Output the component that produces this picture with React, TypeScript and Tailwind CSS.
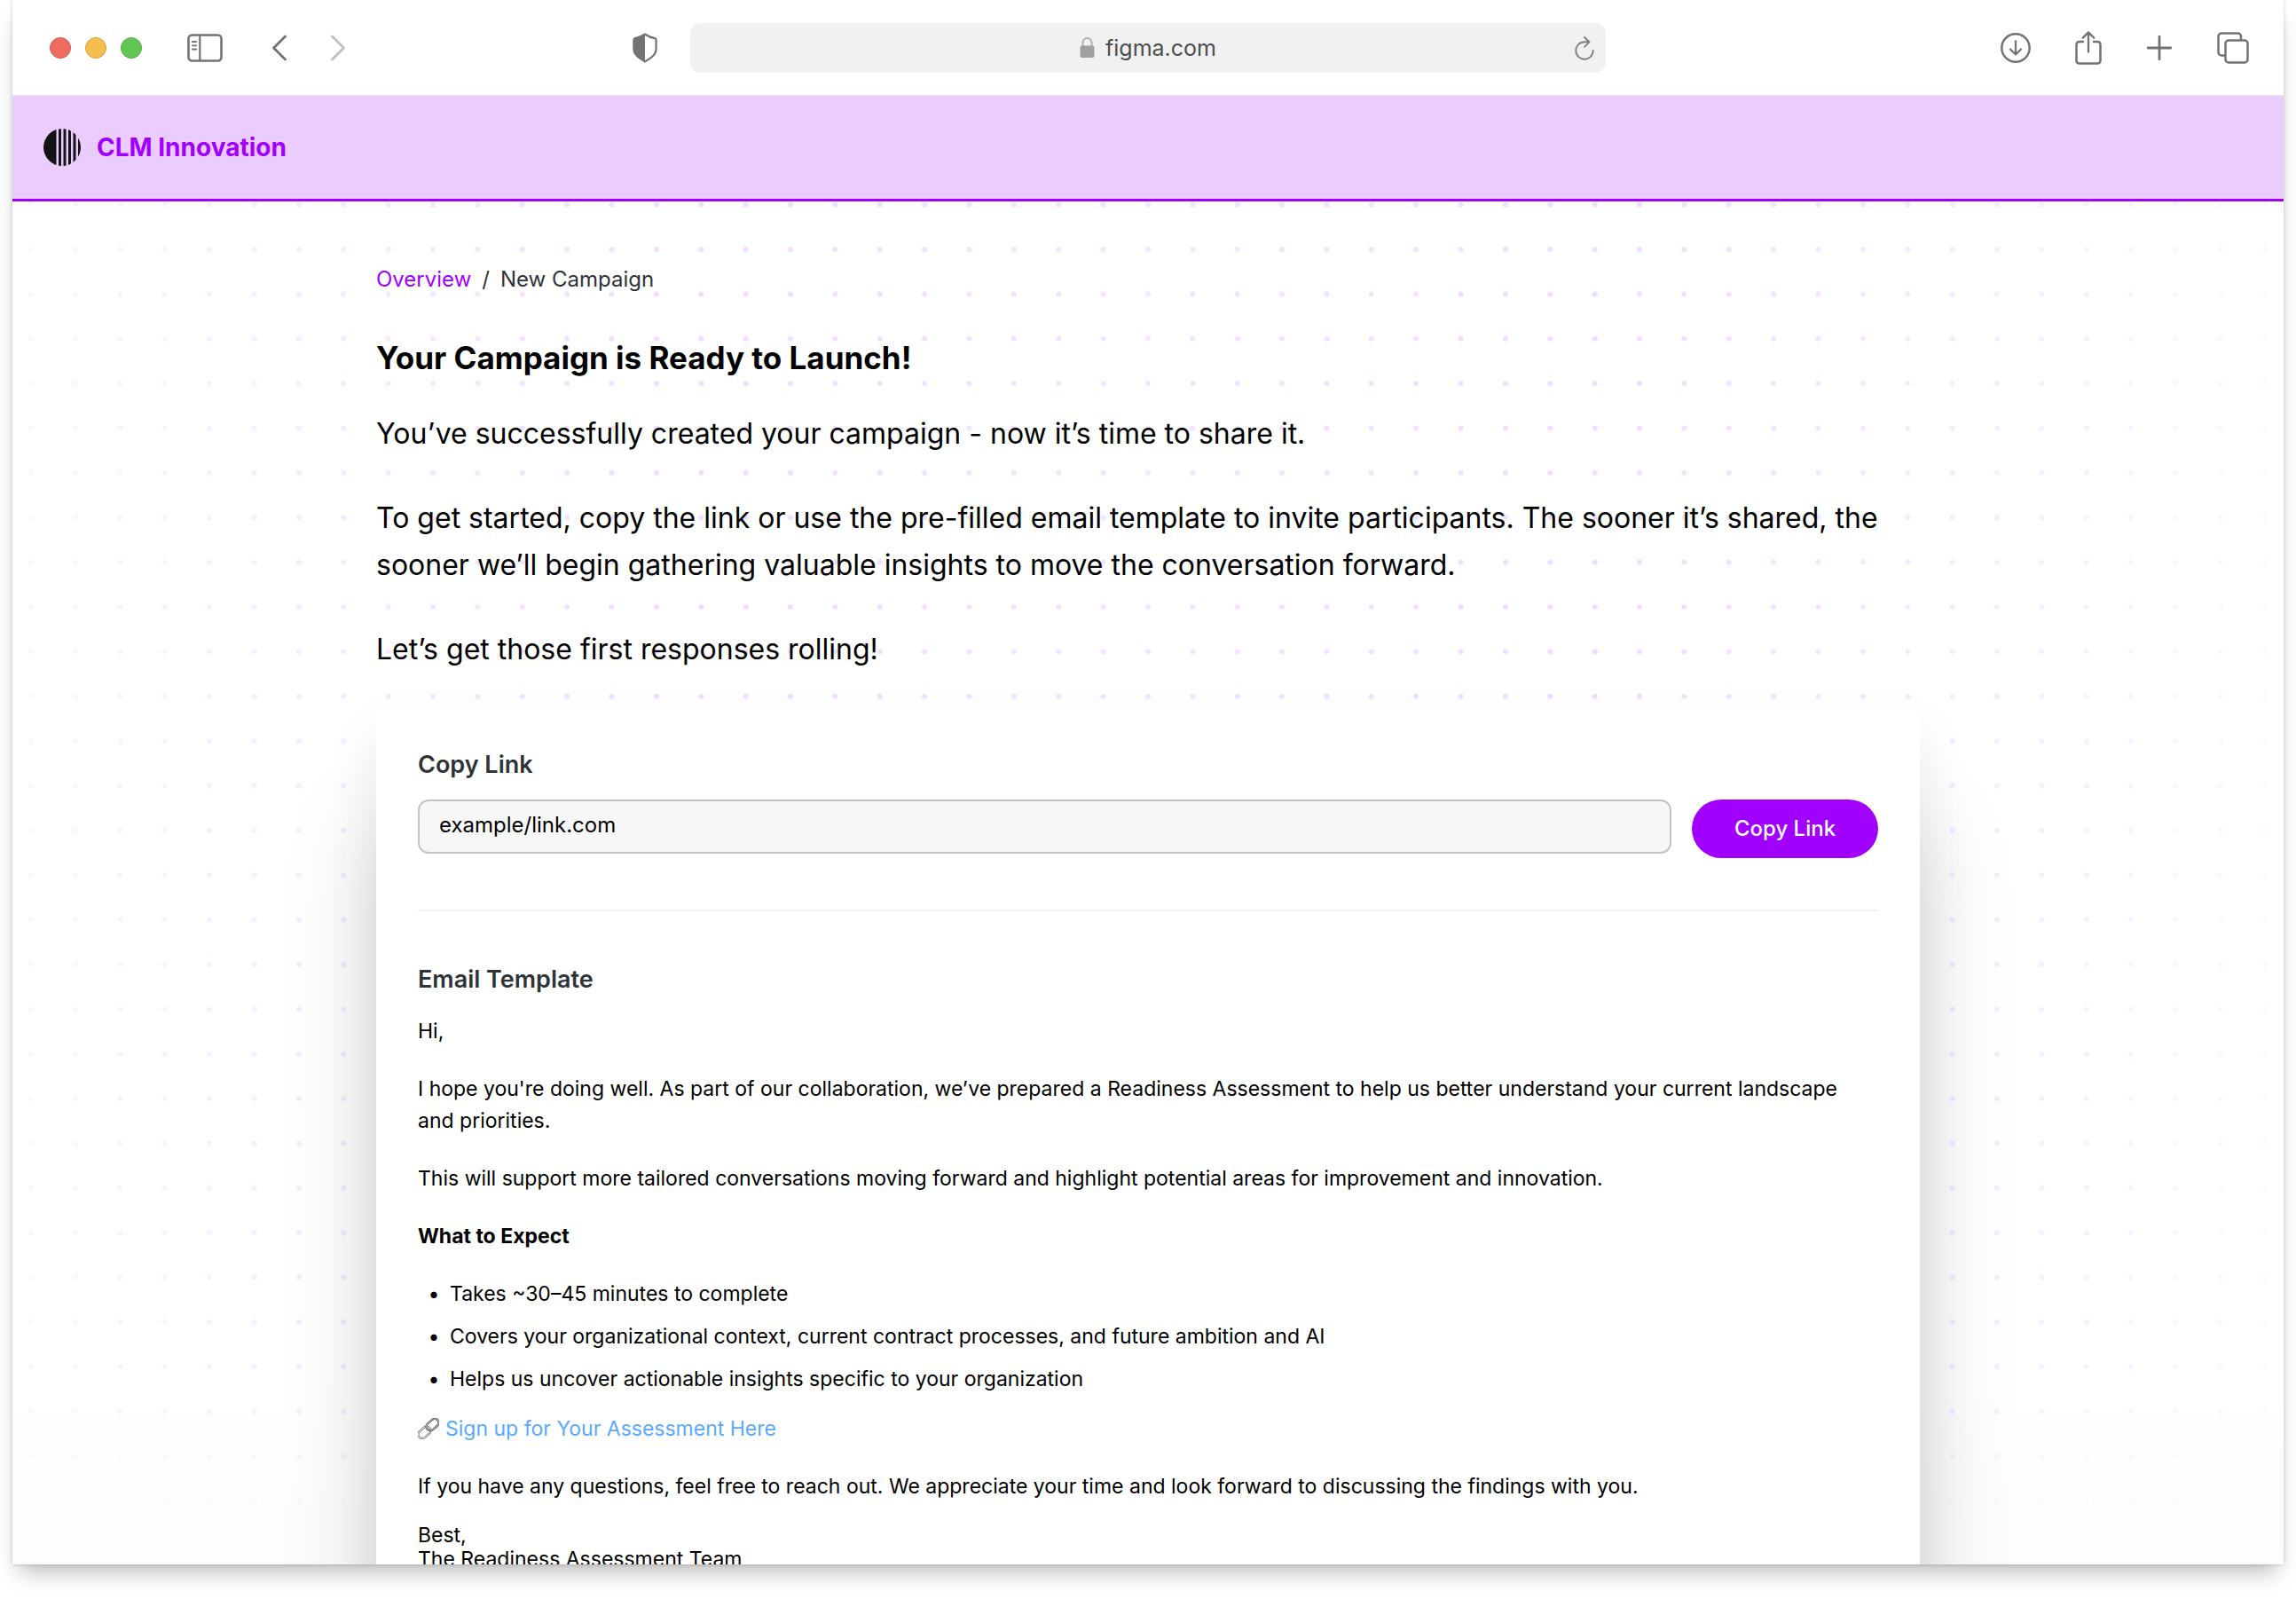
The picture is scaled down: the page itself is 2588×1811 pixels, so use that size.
import React, { useState } from 'react';

const expectations = [
  'Takes ~30–45 minutes to complete',
  'Covers your organizational context, current contract processes, and future ambition and AI',
  'Helps us uncover actionable insights specific to your organization',
];

const BrowserBar = () => {
  const [url, setUrl] = useState<string>('figma.com');

  return (
    <div className="grid h-27 shrink-0 grid-cols-[37fr_50fr_37fr] items-center border-b border-[#e6e6e6] bg-white text-[#737373]">
      <div className="flex items-center pl-[42px] pr-[37px]">
        <div className="flex gap-4">
          <button
            aria-label="Close"
            className="size-6 rounded-full border border-[#d5554c] bg-[#ed6b60]"
          />
          <button
            aria-label="Minimize"
            className="size-6 rounded-full border border-[#d9a13d] bg-[#f5bf4f]"
          />
          <button
            aria-label="Zoom"
            className="size-6 rounded-full border border-[#54a944] bg-[#62c655]"
          />
        </div>
        <button aria-label="Sidebar" className="ml-[51px]">
          <svg width="40" height="32" viewBox="0 0 40 32" fill="none" stroke="currentColor">
            <rect x="1.5" y="1.5" width="37" height="29" rx="4" strokeWidth="2.6" />
            <path d="M14.3 2v28" strokeWidth="2.2" />
            <path d="M5.8 9h4.4M5.8 13.3h4.4M5.8 17.5h4.4" strokeWidth="1.8" strokeLinecap="round" />
          </svg>
        </button>
        <button aria-label="Back" className="ml-14">
          <svg width="16" height="30" viewBox="0 0 16 30" fill="none" stroke="currentColor">
            <path
              d="M14.5 2 1.5 15l13 13"
              strokeWidth="2.8"
              strokeLinecap="round"
              strokeLinejoin="round"
            />
          </svg>
        </button>
        <button aria-label="Forward" className="ml-[50px] text-[#bfbfbf]">
          <svg width="16" height="30" viewBox="0 0 16 30" fill="none" stroke="currentColor">
            <path
              d="m1.5 2 13 13-13 13"
              strokeWidth="2.8"
              strokeLinecap="round"
              strokeLinejoin="round"
            />
          </svg>
        </button>
        <button aria-label="Privacy report" className="ml-auto">
          <svg width="28" height="34" viewBox="0 0 28 34">
            <path
              d="M14 1.5c3.6 2.6 7.2 4 11 4.6 1 .2 1.6.8 1.6 1.8V18c0 7-6.6 11-12.6 14.5C8 29 1.4 25 1.4 18V7.900c0-1 .6-1.600 1.600-1.800 3.800-.6 7.400-2 11-4.600Z"
              fill="none"
              stroke="currentColor"
              strokeWidth="2.2"
              strokeLinejoin="round"
            />
            <path
              d="M14 1.5C10.400 4.100 6.800 5.500 3 6.100c-1 .2-1.600.8-1.600 1.800V18c0 7 6.600 11 12.600 14.500Z"
              fill="currentColor"
            />
          </svg>
        </button>
      </div>

      <div className="grid h-14 grid-cols-[1fr_auto_1fr] items-center rounded-xl bg-[#f1f1f1] px-[13px]">
        <span />
        <label className="flex items-center gap-3">
          <svg width="17" height="25" viewBox="0 0 17 25">
            <path d="M3.5 12V7a5 5 0 0 1 10 0v5" fill="none" stroke="#b0b0b0" strokeWidth="2" />
            <rect x="0.5" y="10.5" width="16" height="13.5" rx="2.2" fill="#9f9f9f" />
          </svg>
          <input
            type="text"
            aria-label="Address"
            className="[field-sizing:content] bg-transparent text-[25px] leading-9 text-[#4d4d4d] outline-none"
            value={url}
            onChange={(e) => setUrl(e.target.value)}
          />
        </label>
        <button aria-label="Reload" className="justify-self-end text-[#808080]">
          <svg width="22" height="28" viewBox="0 0 22 28" fill="none" stroke="currentColor">
            <path
              d="M16.5 7.3H11A9.7 9.7 0 1 0 20.7 17M11 2l5.5 5.3L11 12.8"
              strokeWidth="1.9"
              strokeLinecap="round"
              strokeLinejoin="round"
            />
          </svg>
        </button>
      </div>

      <div className="flex items-center justify-end gap-[50px] pr-[39px]">
        <button aria-label="Downloads">
          <svg width="34" height="34" viewBox="0 0 34 34" fill="none" stroke="currentColor">
            <circle cx="17" cy="17" r="15.7" strokeWidth="2.5" />
            <path
              d="M17 9.5V24M11 18.5l6 6 6-6"
              strokeWidth="2.3"
              strokeLinecap="round"
              strokeLinejoin="round"
            />
          </svg>
        </button>
        <button aria-label="Share">
          <svg width="30" height="38" viewBox="0 0 30 38" fill="none" stroke="currentColor">
            <path
              d="M10 12H4.500a3 3 0 0 0-3 3v18.500a3 3 0 0 0 3 3h21a3 3 0 0 0 3-3V15a3 3 0 0 0-3-3H20"
              strokeWidth="2.5"
            />
            <path
              d="M15 23.5V1.8M8.8 7.6 15 1.4l6.2 6.2"
              strokeWidth="2.3"
              strokeLinecap="round"
              strokeLinejoin="round"
            />
          </svg>
        </button>
        <button aria-label="New tab">
          <svg width="30" height="30" viewBox="0 0 30 30" fill="none" stroke="currentColor">
            <path d="M15 2.2v25.600M2.2 15h25.600" strokeWidth="2.8" strokeLinecap="round" />
          </svg>
        </button>
        <button aria-label="Tab overview">
          <svg width="36" height="36" viewBox="0 0 36 36" fill="none" stroke="currentColor">
            <path
              d="M9.5 26.5H5a3.5 3.5 0 0 1-3.5-3.5V5A3.5 3.5 0 0 1 5 1.5h18.500A3.5 3.5 0 0 1 27 5v4.500"
              strokeWidth="2.5"
            />
            <rect x="9.5" y="9.5" width="25" height="25" rx="3.5" strokeWidth="2.5" />
          </svg>
        </button>
      </div>
    </div>
  );
};

const Logo = () => (
  <svg width="42" height="42" viewBox="0 0 42 42">
    <clipPath id="logo-clip">
      <circle cx="21" cy="21" r="21" />
    </clipPath>
    <g clipPath="url(#logo-clip)" fill="#141414">
      <rect x="0" width="14.5" height="42" />
      <rect x="17" width="3" height="42" />
      <rect x="22.5" width="3" height="42" />
      <rect x="28" width="3" height="42" />
      <rect x="33.5" width="3" height="42" />
      <rect x="39" width="3" height="42" />
    </g>
  </svg>
);

const DotPattern = () => (
  <svg className="pointer-events-none absolute inset-0 h-full w-full" aria-hidden="true">
    <defs>
      <pattern id="dots" width="50.37" height="50.37" patternUnits="userSpaceOnUse">
        <circle cx="20.7" cy="3.7" r="3" fill="#edd5ff" />
      </pattern>
      <linearGradient id="fade-x">
        <stop offset="0" stopColor="#fff" stopOpacity="0.2" />
        <stop offset="0.3" stopColor="#fff" stopOpacity="0.85" />
        <stop offset="0.5" stopColor="#fff" stopOpacity="0.65" />
        <stop offset="0.7" stopColor="#fff" stopOpacity="0.85" />
        <stop offset="1" stopColor="#fff" stopOpacity="0.15" />
      </linearGradient>
      <linearGradient id="fade-y" x2="0" y2="1">
        <stop offset="0.87" stopColor="#fcfcfc" stopOpacity="0" />
        <stop offset="0.98" stopColor="#fdfdfd" stopOpacity="1" />
      </linearGradient>
      <mask id="dots-mask">
        <rect width="100%" height="100%" fill="url(#fade-x)" />
      </mask>
    </defs>
    <rect width="100%" height="100%" fill="url(#dots)" mask="url(#dots-mask)" />
    <rect width="100%" height="100%" fill="url(#fade-y)" />
  </svg>
);

const LinkIcon = () => (
  <svg width="24" height="24" viewBox="0 0 24 24" fill="none" aria-hidden="true">
    <g transform="rotate(-42 12 12)">
      <rect x="-2" y="7.6" width="15.5" height="9" rx="4.5" stroke="#72777c" strokeWidth="2.4" />
      <rect x="-2" y="7.6" width="15.5" height="9" rx="4.5" stroke="#d5dade" strokeWidth="1.1" />
      <rect x="10.5" y="7.2" width="15.5" height="9" rx="4.5" stroke="#55585c" strokeWidth="2.4" />
      <rect x="10.5" y="7.2" width="15.5" height="9" rx="4.5" stroke="#b4b9bf" strokeWidth="1" />
    </g>
  </svg>
);

const CopyLinkForm = () => {
  const [link, setLink] = useState<string>('example/link.com');

  const handleCopy = async () => {
    await navigator.clipboard.writeText(link);
  };

  return (
    <div>
      <label htmlFor="link" className="text-[27px] leading-9 font-semibold text-[#2e3338]">
        Copy Link
      </label>
      <div className="mt-[21px] flex items-start gap-[23px]">
        <input
          id="link"
          type="text"
          className="h-[61px] min-w-0 flex-1 rounded-xl border-2 border-[#c4c4c4] bg-[#f7f7f7] px-[22px] pb-1 text-2xl text-black"
          value={link}
          onChange={(e) => setLink(e.target.value)}
        />
        <button
          className="h-[66px] w-[210px] rounded-full bg-[#a100ff] text-2xl font-medium text-white"
          onClick={handleCopy}
        >
          Copy Link
        </button>
      </div>
    </div>
  );
};

const EmailTemplate = () => (
  <div>
    <h2 className="text-[27px] leading-9 font-semibold text-[#2e3338]">Email Template</h2>
    <div className="mt-[22px] flex flex-col gap-[29px] text-[23px] leading-9 text-black">
      <p>Hi,</p>
      <p>
        I hope you're doing well. As part of our collaboration, we’ve prepared a Readiness
        Assessment to help us better understand your current landscape and priorities.
      </p>
      <p>
        This will support more tailored conversations moving forward and highlight potential areas
        for improvement and innovation.
      </p>
      <h3 className="font-bold">What to Expect</h3>
      <div className="flex flex-col gap-5">
        <ul className="flex flex-col gap-3">
          {expectations.map((item) => (
            <li key={item} className="flex">
              <span className="w-9 text-center">•</span>
              {item}
            </li>
          ))}
        </ul>
        <p className="flex items-center gap-[7px]">
          <LinkIcon />
          <a href="#assessment" className="text-[#5aa9ff]">
            Sign up for Your Assessment Here
          </a>
        </p>
      </div>
      <p>
        If you have any questions, feel free to reach out. We appreciate your time and look forward
        to discussing the findings with you.
      </p>
    </div>
    <p className="mt-6 text-[23px] leading-[27px] text-black">
      Best,
      <br />
      The Readiness Assessment Team
    </p>
  </div>
);

const App = () => {
  return (
    <div className="h-screen bg-white px-3.5 pb-12 font-['Inter',sans-serif]">
      <div className="flex h-full flex-col overflow-hidden bg-white shadow-[0_0_4px_rgba(0,0,0,0.18),0_16px_24px_-8px_rgba(0,0,0,0.28)]">
        <BrowserBar />
        <header className="flex h-[119px] shrink-0 items-center gap-[18px] border-b-3 border-[#a100ff] bg-[#ebccff] px-[35px]">
          <Logo />
          <a href="#home" className="text-[28px] leading-9 font-bold text-[#a100ff]">
            CLM Innovation
          </a>
        </header>

        <main className="relative min-h-0 flex-1 overflow-hidden">
          <DotPattern />
          <div className="relative mx-auto max-w-[1740px] pt-[70px]">
            <nav className="flex gap-3 text-2xl leading-9 text-[#2e3338]">
              <a href="#overview" className="text-[#a100ff]">
                Overview
              </a>
              <span>/</span>
              <span>New Campaign</span>
            </nav>
            <h1 className="mt-12 text-[35px] leading-11 font-bold text-black">
              Your Campaign is Ready to Launch!
            </h1>
            <div className="mt-[37px] flex flex-col gap-[42px] text-[32px] leading-[53px] text-black">
              <p>You’ve successfully created your campaign - now it’s time to share it.</p>
              <p>
                To get started, copy the link or use the pre-filled email template to invite
                participants. The sooner it’s shared, the sooner we’ll begin gathering valuable
                insights to move the conversation forward.
              </p>
              <p>Let’s get those first responses rolling!</p>
            </div>

            <section className="mt-[37px] rounded-lg bg-white px-[47px] pt-[49px] pb-60 shadow-[0_30px_60px_rgba(0,0,0,0.08),0_130px_110px_rgba(0,0,0,0.16)]">
              <CopyLinkForm />
              <hr className="mt-[58px] mb-[59px] border-t-2 border-[#f3f3f3]" />
              <EmailTemplate />
            </section>
          </div>
        </main>
      </div>
    </div>
  );
};

export default App;
